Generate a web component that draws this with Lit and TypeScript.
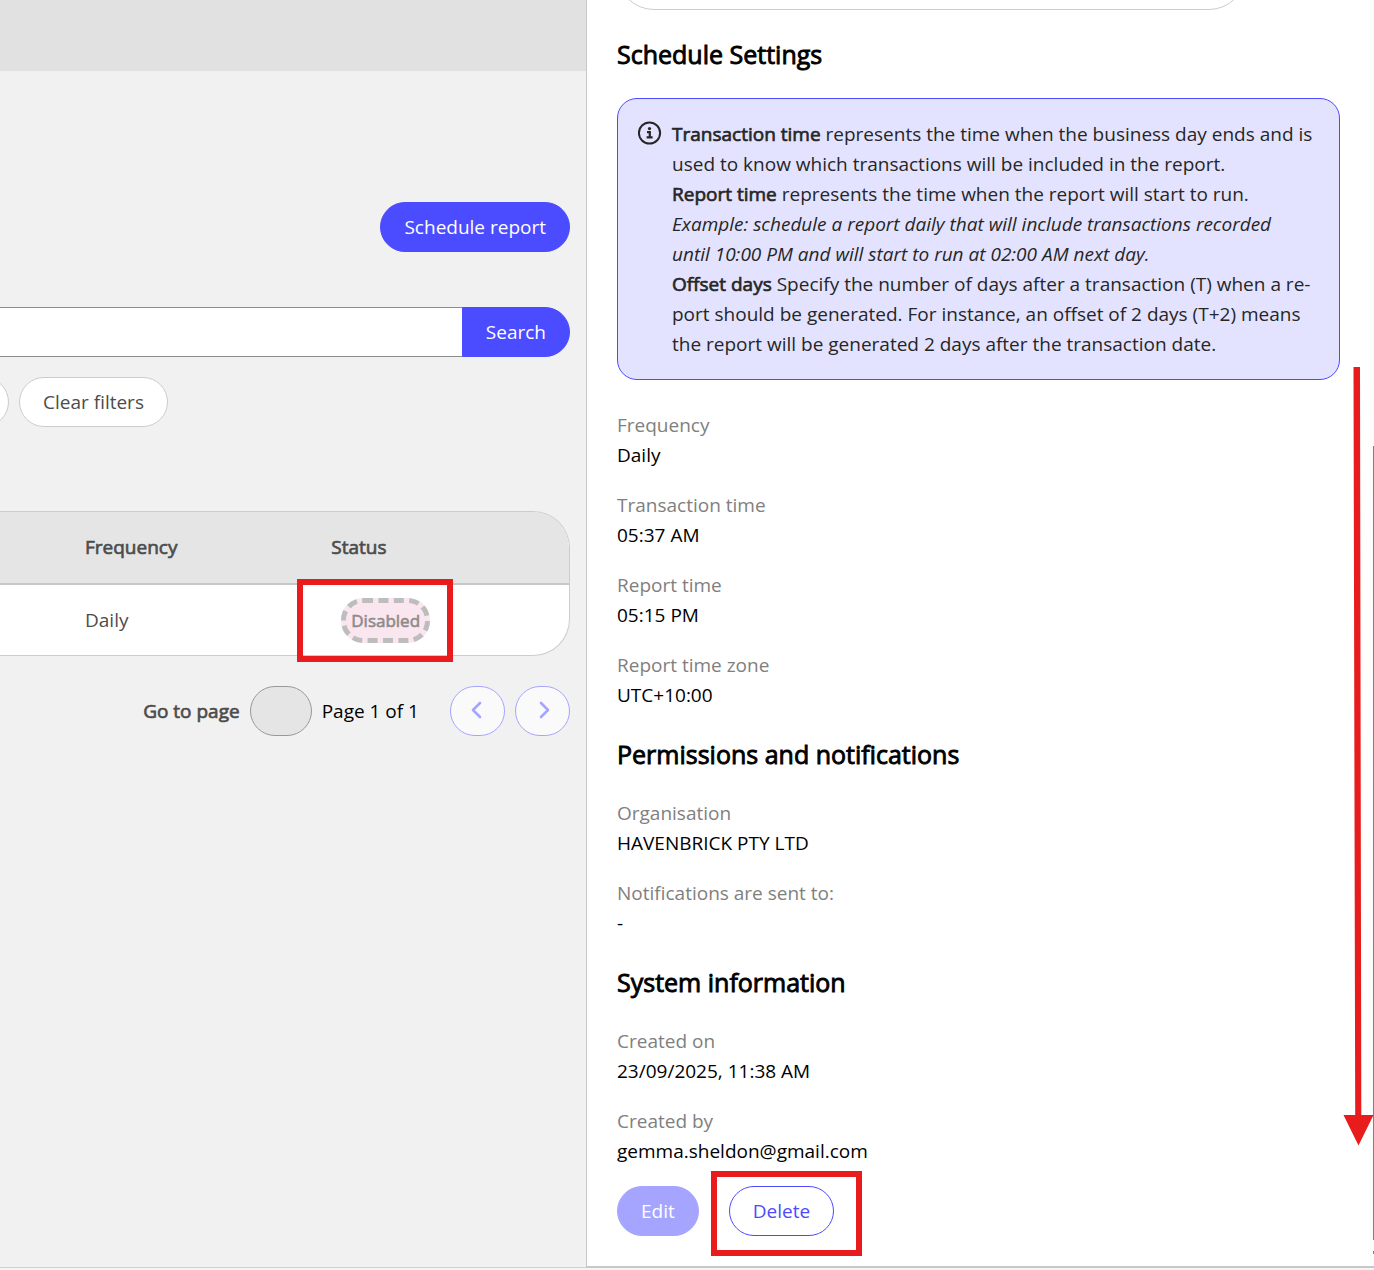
import { LitElement, html, css } from "lit";
import { customElement } from "lit/decorators.js";

interface Field {
  label: string;
  value: string;
}

const schedule: Field[] = [
  { label: "Frequency", value: "Daily" },
  { label: "Transaction time", value: "05:37 AM" },
  { label: "Report time", value: "05:15 PM" },
  { label: "Report time zone", value: "UTC+10:00" },
];

const permissions: Field[] = [
  { label: "Organisation", value: "HAVENBRICK PTY LTD" },
  { label: "Notifications are sent to:", value: "-" },
];

const system: Field[] = [
  { label: "Created on", value: "23/09/2025, 11:38 AM" },
  { label: "Created by", value: "gemma.sheldon@gmail.com" },
];

@customElement("app-root")
export class AppRoot extends LitElement {
  static styles = css`
    :host {
      display: block;
      font-family: "Open Sans", "Noto Sans", sans-serif;
      font-size: 19px;
      line-height: 30px;
      color: #000;
      background: #f5f5f5;
      min-height: 100vh;
    }
    * {
      box-sizing: border-box;
    }
    .page {
      position: relative;
      display: grid;
      grid-template-columns: minmax(0, 586fr) minmax(0, 788fr);
      overflow: hidden;
      min-height: calc(100vh - 2px);
    }
    .strong {
      font-weight: 400;
      -webkit-text-stroke: 0.035em currentColor;
    }
    button,
    input {
      font: inherit;
      margin: 0;
    }
    .btn {
      height: 50px;
      padding: 0 23px;
      border: 1px solid #4b4bff;
      border-radius: 25px;
      background: #4b4bff;
      color: #fff;
      white-space: nowrap;
    }

    /* report list */
    .list {
      background: #f1f1f1;
      border-bottom: 1px solid #cfcfcf;
      overflow: hidden;
    }
    .topbar {
      height: 71px;
      background: #e1e1e1;
    }
    .list-body {
      padding: 131px 16px 0 0;
    }
    .actions {
      display: flex;
      justify-content: flex-end;
      margin-bottom: 55px;
    }
    .search {
      display: flex;
      margin-bottom: 20px;
    }
    .search-input {
      flex: 1;
      min-width: 0;
      height: 50px;
      padding: 0 20px;
      border: solid #8c8c8c;
      border-width: 1px 0;
      background: #fff;
      border-radius: 0;
    }
    .search .btn {
      border-radius: 0 25px 25px 0;
    }
    .filters {
      display: flex;
      gap: 10px;
      margin: 0 0 84px -71px;
    }
    .pill {
      height: 50px;
      padding: 0 23px;
      border: 1px solid #ccc;
      border-radius: 25px;
      background: #fff;
      color: #4c4c4c;
    }
    .pill-cut {
      width: 80px;
    }
    .table-wrap {
      border: 1px solid #ccc;
      border-left: 0;
      border-radius: 0 37px 37px 0;
      background: #fff;
      margin-bottom: 30px;
    }
    table {
      width: 100%;
      border-collapse: separate;
      border-spacing: 0;
      table-layout: fixed;
      color: #4c4c4c;
    }
    th,
    td {
      text-align: left;
      height: 70px;
      padding: 0;
    }
    th {
      background: #e5e5e5;
      height: 73px;
      padding-bottom: 1px;
      border-bottom: 2px solid #c8c8c8;
    }
    th:last-child {
      border-top-right-radius: 36px;
    }
    .col-frequency {
      width: 54%;
      padding-left: 85px;
    }
    .col-status {
      padding-left: 24px;
    }
    .status {
      position: relative;
      display: inline-block;
      vertical-align: middle;
      margin-left: 10px;
      padding: 0 5px;
      height: 45px;
      line-height: 35px;
      border: 5px dashed #bdbdbd;
      border-radius: 22px;
      background: #fae6ef;
      color: #8c8c8c;
      font-size: 17px;
    }
    .pager {
      display: flex;
      justify-content: flex-end;
      align-items: center;
      gap: 10px;
    }
    .goto {
      display: flex;
      align-items: center;
      gap: 10px;
      color: #4c4c4c;
    }
    .page-input {
      width: 62px;
      height: 50px;
      border: 1px solid #999;
      border-radius: 25px;
      background: #e5e5e5;
      text-align: center;
    }
    .page-count {
      margin-right: 21px;
    }
    .arrow-btn {
      display: flex;
      align-items: center;
      justify-content: center;
      width: 55px;
      height: 50px;
      padding: 0;
      border: 1px solid #a5a5ff;
      border-radius: 25px;
      background: #fafafa;
      color: #a5a5ff;
    }

    /* details panel */
    .details {
      background: #fff;
      border-left: 1px solid #c8c8c8;
      border-bottom: 2px solid #c8c8c8;
      padding: 0 34px 28px 30px;
    }
    .card-end {
      width: 87%;
      height: 10px;
      margin-bottom: 25px;
      display: flex;
      align-items: flex-end;
      overflow: hidden;
    }
    .card-shape {
      flex: 1;
      height: 80px;
      border: 1px solid #ccc;
      border-radius: 37px;
    }
    h2 {
      margin: 25px 0;
      font-size: 25px;
      line-height: 38px;
    }
    .info {
      display: flex;
      gap: 10px;
      padding: 20px;
      margin-bottom: 30px;
      border: 1px solid #4b4bff;
      border-radius: 20px;
      background: #e3e3ff;
      color: #262626;
    }
    .info-icon {
      flex: none;
      margin-top: 2px;
    }
    .info p {
      margin: 0;
    }
    dl {
      margin: 0;
      display: flex;
      flex-direction: column;
      gap: 20px;
    }
    dt {
      color: #808080;
    }
    dd {
      margin: 0;
    }
    .buttons {
      display: flex;
      gap: 30px;
      margin-top: 20px;
    }
    .edit {
      background: #a5a5ff;
      border-color: #a5a5ff;
    }
    .delete-slot {
      position: relative;
    }
    .delete {
      background: #fff;
      color: #4b4bff;
    }

    /* annotations laid over the page */
    .mark {
      position: absolute;
      border: 6px solid #e81c1c;
      pointer-events: none;
    }
    .mark-status {
      inset: -24px -28px -24px -49px;
    }
    .mark-delete {
      inset: -15px -28px -20px -18px;
    }
    .arrow {
      position: absolute;
      right: 0;
      top: 366px;
    }
    .track {
      position: absolute;
      right: 0;
      top: 0;
      bottom: 2px;
      width: 4px;
      background: #fcfcfc;
    }
    .thumb {
      position: absolute;
      right: 0;
      top: 446px;
      bottom: 28px;
      width: 1px;
      background: #808080;
    }
    .tick {
      position: absolute;
      right: 0;
      bottom: 14px;
      width: 1px;
      height: 3px;
      background: #808080;
    }
  `;

  private fields(items: Field[]) {
    return html`<dl>
      ${items.map((f) => html`<div><dt>${f.label}</dt><dd>${f.value}</dd></div>`)}
    </dl>`;
  }

  private chevron(points: string) {
    return html`<svg width="24" height="24" viewBox="0 0 24 24" fill="none" stroke="currentColor"
      stroke-width="2.6" stroke-linecap="round" stroke-linejoin="round" aria-hidden="true">
      <polyline points=${points}></polyline>
    </svg>`;
  }

  render() {
    return html`
      <div class="page">
        <main class="list">
          <div class="topbar"></div>
          <div class="list-body">
            <div class="actions"><button class="btn">Schedule report</button></div>
            <form class="search" @submit=${(e: Event) => e.preventDefault()}>
              <input class="search-input" type="text" aria-label="Search" />
              <button class="btn">Search</button>
            </form>
            <div class="filters">
              <span class="pill pill-cut"></span>
              <button class="pill">Clear filters</button>
            </div>
            <div class="table-wrap">
              <table>
                <thead>
                  <tr>
                    <th class="col-frequency strong">Frequency</th>
                    <th class="col-status strong">Status</th>
                  </tr>
                </thead>
                <tbody>
                  <tr>
                    <td class="col-frequency">Daily</td>
                    <td class="col-status">
                      <span class="status strong">Disabled<span class="mark mark-status"></span></span>
                    </td>
                  </tr>
                </tbody>
              </table>
            </div>
            <nav class="pager">
              <label class="goto"><span class="strong">Go to page</span>
                <input class="page-input" type="text" />
              </label>
              <span class="page-count">Page 1 of 1</span>
              <button class="arrow-btn" aria-label="Previous page">${this.chevron("14,4 7,11 14,18")}</button>
              <button class="arrow-btn" aria-label="Next page">${this.chevron("10,4 17,11 10,18")}</button>
            </nav>
          </div>
        </main>

        <aside class="details">
          <div class="track"></div>
          <div class="thumb"></div>
          <div class="tick"></div>
          <div class="card-end"><div class="card-shape"></div></div>
          <h2 class="strong">Schedule Settings</h2>
          <div class="info">
            <svg class="info-icon" width="24" height="24" viewBox="0 0 24 24" aria-hidden="true">
              <circle cx="11.5" cy="12" r="10.6" fill="none" stroke="#262626" stroke-width="2"></circle>
              <circle cx="11.5" cy="7.6" r="1.6" fill="#262626"></circle>
              <path d="M9 11.2H11.8V16M8.6 16.4H14.6" fill="none" stroke="#262626" stroke-width="2.2"></path>
            </svg>
            <p>
              <span class="strong">Transaction time</span> represents the time when the business day ends and is
              used to know which transactions will be included in the report.<br />
              <span class="strong">Report time</span> represents the time when the report will start to run.<br />
              <em>Example: schedule a report daily that will include transactions recorded<br />
              until 10:00 PM and will start to run at 02:00 AM next day.</em><br />
              <span class="strong">Offset days</span> Specify the number of days after a transaction (T) when a
              re&shy;port should be generated. For instance, an offset of 2 days (T+2) means the report will be
              generated 2 days after the transaction date.
            </p>
          </div>
          ${this.fields(schedule)}
          <h2 class="strong">Permissions and notifications</h2>
          ${this.fields(permissions)}
          <h2 class="strong">System information</h2>
          ${this.fields(system)}
          <div class="buttons">
            <button class="btn edit">Edit</button>
            <div class="delete-slot">
              <button class="btn delete">Delete</button>
              <span class="mark mark-delete"></span>
            </div>
          </div>
        </aside>

        <svg class="arrow" width="32" height="780" viewBox="0 0 32 780" fill="#e81c1c" aria-hidden="true">
          <path d="M11.5 1H18L19.3 749H31.5L16.5 779.5L1.5 749H13.2Z"></path>
        </svg>
      </div>
    `;
  }
}
